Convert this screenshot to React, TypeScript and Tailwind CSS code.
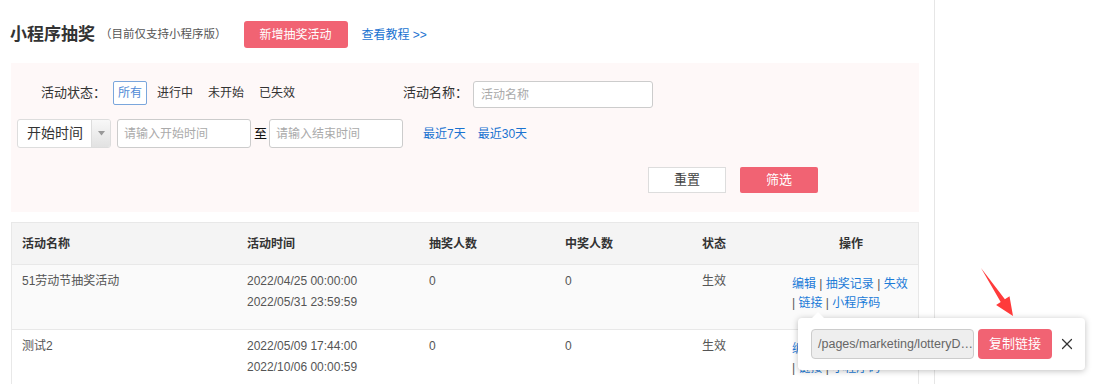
import { X } from 'lucide-react';

const font = "font-['Liberation_Sans','Noto_Sans_CJK_SC',sans-serif]";

const rows = [
  { name: '51劳动节抽奖活动', start: '2022/04/25 00:00:00', end: '2022/05/31 23:59:59', draws: '0', wins: '0', status: '生效', bg: 'bg-[#fafafa]' },
  { name: '测试2', start: '2022/05/09 17:44:00', end: '2022/10/06 00:00:59', draws: '0', wins: '0', status: '生效', bg: 'bg-white' },
];

const Ops = () => (
  <div className="text-[12px] leading-[19px] text-[#1a7bd8]">
    <div>
      <span>编辑</span> <span className="text-[#555]">|</span> <span>抽奖记录</span>{' '}
      <span className="text-[#555]">|</span> <span>失效</span>
    </div>
    <div>
      <span className="text-[#555]">|</span> <span>链接</span> <span className="text-[#555]">|</span>{' '}
      <span>小程序码</span>
    </div>
  </div>
);

const App = () => {
  return (
    <div className={`${font} relative flex h-[384px] w-[1099px] overflow-hidden bg-white text-[#333]`}>
      <div className="h-full w-[935px] shrink-0 border-r border-[#e6e6e6] pl-[11px]">
        {/* title */}
        <div className="ml-[-1px] mt-[21px] flex h-[27px] items-center">
          <h1 className="text-[17px] font-bold text-[#333]">小程序抽奖</h1>
          <span className="ml-[5px] text-[11.5px] text-[#555]">（目前仅支持小程序版）</span>
          <button className="ml-[17px] h-[27px] w-[104px] rounded-[3px] bg-[#f16373] text-[12px] text-white">
            新增抽奖活动
          </button>
          <a className="ml-[14px] text-[12px] text-[#1a73d1]">查看教程 &gt;&gt;</a>
        </div>

        {/* filters */}
        <div className="mt-[15px] h-[149px] w-[908px] bg-[#fef8f8] pt-[18px]">
          <div className="flex h-[24px] items-center">
            <span className="ml-[30px] w-[72px] text-[13px] text-[#333]">活动状态：</span>
            <span className="flex h-[24px] w-[34px] items-center justify-center rounded-[2px] border border-[#7aa6dc] bg-white text-[12px] text-[#4f8ad6]">
              所有
            </span>
            <span className="ml-[10px] text-[12px] text-[#333]">进行中</span>
            <span className="ml-[15px] text-[12px] text-[#333]">未开始</span>
            <span className="ml-[15px] text-[12px] text-[#333]">已失效</span>
            <span className="ml-[108px] w-[70px] text-[13px] text-[#333]">活动名称：</span>
            <div className="mt-[3px] flex h-[27px] w-[180px] items-center rounded-[3px] border border-[#ccc] bg-white pl-[7px] text-[12px] text-[#aaa]">
              活动名称
            </div>
          </div>

          <div className="mt-[14px] flex h-[29px] items-center">
            <div className="ml-[6px] flex h-[29px] w-[94px] overflow-hidden rounded-[3px] border border-[#ddd] bg-white">
              <span className="flex flex-1 items-center pl-[9px] text-[14px] text-[#333]">开始时间</span>
              <span className="flex w-[19px] items-center justify-center border-l border-[#ddd] bg-gradient-to-b from-[#f8f8f8] to-[#e2e2e2]">
                <svg width="7" height="5" viewBox="0 0 7 5">
                  <path d="M0 0 L7 0 L3.5 4.5 Z" fill="#999" />
                </svg>
              </span>
            </div>
            <div className="ml-[6px] flex h-[29px] w-[134px] items-center rounded-[3px] border border-[#ccc] bg-white pl-[6px] text-[12px] text-[#aaa]">
              请输入开始时间
            </div>
            <span className="ml-[3px] text-[13px] text-[#111]">至</span>
            <div className="ml-[2px] flex h-[29px] w-[134px] items-center rounded-[3px] border border-[#ccc] bg-white pl-[6px] text-[12px] text-[#aaa]">
              请输入结束时间
            </div>
            <a className="ml-[20px] text-[12px] text-[#1a73d1]">最近7天</a>
            <a className="ml-[12px] text-[12px] text-[#1a73d1]">最近30天</a>
          </div>

          <div className="mt-[19px] flex h-[26px] items-center">
            <button className="ml-[637px] h-[26px] w-[78px] border border-[#ddd] bg-white text-[13px] text-[#444]">
              重置
            </button>
            <button className="ml-[14px] h-[26px] w-[78px] rounded-[2px] bg-[#f16373] text-[13px] text-white">
              筛选
            </button>
          </div>
        </div>

        {/* table */}
        <div className="mt-[10px] w-[908px] border border-b-0 border-[#e8e8e8] text-[12px]">
          <div className="grid h-[41px] grid-cols-[225px_182px_136px_137px_92px_1fr] items-center bg-[#f4f4f4] font-bold text-[#333]">
            <span className="pl-[10px]">活动名称</span>
            <span className="pl-[10px]">活动时间</span>
            <span className="pl-[10px]">抽奖人数</span>
            <span className="pl-[10px]">中奖人数</span>
            <span className="pl-[10px]">状态</span>
            <span className="text-center">操作</span>
          </div>
          {rows.map((r, idx) => (
            <div
              key={idx}
              className={`grid h-[65px] grid-cols-[225px_182px_136px_137px_92px_1fr] border-t border-[#e8e8e8] ${r.bg} pt-[6px] leading-[21px] text-[#555]`}
            >
              <span className="pl-[10px]">{r.name}</span>
              <span className="pl-[10px]">
                {r.start}
                <br />
                {r.end}
              </span>
              <span className="pl-[10px]">{r.draws}</span>
              <span className="pl-[10px]">{r.wins}</span>
              <span className="pl-[10px]">{r.status}</span>
              <div className="pl-[8px] pt-[4px]">
                <Ops />
              </div>
            </div>
          ))}
        </div>
      </div>
      <div className="flex-1" />

      {/* link popover */}
      <div className="absolute left-[798px] top-[318px] flex h-[52px] w-[287px] items-center rounded-[4px] bg-white pl-[13px] shadow-[0_1px_6px_rgba(0,0,0,0.25)]">
        <span className="absolute left-[14px] top-[-6px] h-0 w-0 border-x-[6px] border-b-[6px] border-x-transparent border-b-white" />
        <div className="flex h-[30px] w-[163px] items-center overflow-hidden whitespace-nowrap rounded-[4px] border border-[#ccc] bg-[#eee] px-[6px] text-[12.5px] text-[#666]">
          /pages/marketing/lotteryD…
        </div>
        <button className="ml-[4px] h-[30px] w-[74px] rounded-[4px] bg-[#f16373] text-[13px] text-white">
          复制链接
        </button>
        <X className="ml-[6px] h-[18px] w-[18px] text-[#333]" strokeWidth={1.6} />
      </div>

      {/* red arrow */}
      <svg className="absolute left-[979px] top-[266px]" width="38" height="54" viewBox="0 0 38 54">
        <polygon points="2,2 25.9,33.2 30.5,30.2 34,50 17.1,39 21.7,36" fill="#ff3b3b" />
      </svg>
    </div>
  );
};

export default App;
